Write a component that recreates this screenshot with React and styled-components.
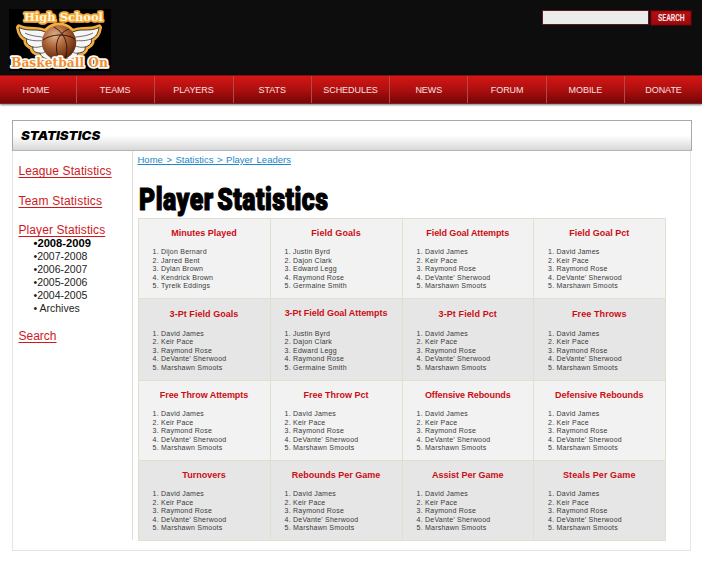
import React from 'react';
import styled, { createGlobalStyle } from 'styled-components';

const Global = createGlobalStyle`
  *, *::before, *::after { box-sizing: border-box; }
  html, body { margin: 0; padding: 0; background: #fff; }
  body {
    font-family: 'Liberation Sans', Arial, sans-serif;
    color: #222;
  }
`;

const Page = styled.div`
  width: 702px;
  height: 563px;
  background: #fff;
`;

const Header = styled.header`
  display: flex;
  justify-content: space-between;
  align-items: flex-start;
  height: 75px;
  padding: 9px 10px 0 9px;
  background: #0d0d0d;
`;

const LogoArt = styled.svg`
  display: block;
  width: 102px;
  height: 62px;
  overflow: visible;
`;

const LogoText = styled.text`
  font-family: 'DejaVu Serif', serif;
  font-weight: 700;
  font-size: ${(p) => p.$size}px;
  paint-order: stroke;
  stroke-linejoin: round;
`;

const SearchForm = styled.form`
  display: flex;
  gap: 1px;
  margin-top: 1px;
`;

const SearchInput = styled.input`
  width: 107px;
  height: 15px;
  padding: 0 3px;
  border: 1px solid #5c1a1f;
  border-radius: 0;
  background: #ebebeb;
  font-size: 9px;
  outline: none;
`;

const SearchButton = styled.button`
  display: flex;
  align-items: center;
  justify-content: center;
  width: 42px;
  height: 16px;
  padding: 0;
  border: 1px solid #4a0508;
  background: linear-gradient(#b80f12, #9c0a0c);
  box-shadow: inset 0 0 2px #5a0406;
  color: #f6e4e4;
  font: 700 8.5px/14px Roboto, sans-serif;
`;

const SearchLabel = styled.span`
  transform: scaleX(0.82);
`;

const Nav = styled.nav`
  display: grid;
  grid-template-columns: 77px repeat(7, 78.3px) 1fr;
  height: 29px;
  border-top: 1px solid #7d1216;
  border-bottom: 1px solid #7d2024;
  background: linear-gradient(#d51615, #ae0f0f 50%, #760606);
  box-shadow: 0 1px 2px rgba(0, 0, 0, 0.5);
`;

const NavItem = styled.a`
  display: flex;
  align-items: center;
  justify-content: center;
  padding-right: ${(p) => p.$shift || 0}px;
  border-right: 1px solid #b5484a;
  color: #f3e2e2;
  font-size: 9px;
  line-height: 10px;
  letter-spacing: -0.05px;

  &:last-child {
    border-right: 0;
  }
`;

const TitleBar = styled.div`
  display: flex;
  align-items: center;
  width: 680px;
  height: 31px;
  margin: 16px 0 0 12px;
  padding: 0 0 0 8px;
  border: 1px solid #a8a8a8;
  border-bottom-color: #b4b4b4;
  background: linear-gradient(#fff 50%, #d8d8d8);
`;

const TitleText = styled.h2`
  margin: 0;
  font: italic 900 12px/14px Inter, sans-serif;
  color: #000;
  transform: scaleX(1.1);
  transform-origin: left;
`;

const Body = styled.div`
  display: flex;
  width: 679px;
  height: 400px;
  margin-left: 12px;
  padding-bottom: 10px;
  border: 1px solid #e4e4e4;
  border-top: 0;
`;

const Sidebar = styled.aside`
  width: 120px;
  padding: 13px 0 0 5.5px;
  border-right: 1px solid #dedede;
`;

const SideLink = styled.a`
  display: block;
  margin-top: ${(p) => p.$gap || 0}px;
  color: #d0181c;
  font-size: 12px;
  line-height: 14px;
  letter-spacing: ${(p) => p.$track || 0}px;
  text-decoration: underline;
  text-underline-offset: 1.5px;
  white-space: nowrap;
`;

const YearList = styled.ul`
  margin: 0 0 0 15px;
  padding: 0;
  list-style: none;
`;

const Year = styled.li`
  height: 13px;
  color: ${(p) => (p.$current ? '#000' : '#222')};
  font-size: ${(p) => (p.$current ? 11.2 : 10.5)}px;
  font-weight: ${(p) => (p.$current ? 700 : 400)};
  line-height: 12.5px;
  white-space: nowrap;
`;

const Main = styled.main`
  display: flex;
  flex-direction: column;
  padding-left: 4.5px;
`;

const Breadcrumb = styled.a`
  height: 12px;
  margin-top: 3px;
  color: #2088c8;
  font-size: 9.5px;
  line-height: 12px;
  word-spacing: 0.9px;
  text-decoration: underline;
  text-underline-offset: 1px;
  white-space: nowrap;
`;

const Heading = styled.h1`
  height: 37px;
  margin: 15px 0 0 1.5px;
  color: #000;
  font: 900 31.5px/37px Roboto, sans-serif;
  letter-spacing: 0.6px;
  word-spacing: -4px;
  -webkit-text-stroke: 1.2px #000;
  transform: scaleX(0.79);
  transform-origin: left;
  white-space: nowrap;
`;

const Grid = styled.div`
  display: grid;
  grid-template-columns: 132px 132px 131.5px 131.5px;
  grid-template-rows: 80px 82px 80px 80px;
  width: 528px;
  border-top: 1px solid #e0dfcf;
  border-left: 1px solid #e0dfcf;
`;

const Card = styled.section`
  padding-top: ${(p) => p.$top}px;
  border-right: 1px solid #e0dfd0;
  border-bottom: 1px solid #e0dfd0;
  background: ${(p) => (p.$dark ? '#e6e6e6' : '#f2f2f2')};
`;

const CardTitle = styled.h3`
  margin: 0;
  color: #cb0d14;
  font-size: 9px;
  font-weight: 700;
  line-height: 11px;
  letter-spacing: ${(p) => p.$track || 0}px;
  text-align: center;
  white-space: nowrap;
`;

const Leaders = styled.ol`
  margin: ${(p) => p.$gap}px 0 0 14px;
  padding: 0;
  list-style: none;
`;

const Leader = styled.li`
  display: flex;
  height: 8.5px;
  color: #3a3a3a;
  font-size: 7px;
  line-height: 8.5px;
  letter-spacing: 0.23px;
  white-space: nowrap;
`;

const Rank = styled.span`
  width: 8.5px;
`;

function Logo() {
  const wing = 'M42 27 C37 22 31 21 26 21 C20 21 15 21 10 18.5 C11 25 13 28 18 30 C16 34 20 37 24 38 C23 42 27 44 31 44 C32 48 36 50 42 51 Z';
  const feathers = 'M16 24 C24 28 31 27 37 29 M18 30 C26 33 32 31 36 32 M24 38 C30 39 33 37 36 36 M31 44 C34 45 36 43 38 41';
  return (
    <LogoArt viewBox="0 0 102 62" role="img" aria-label="High School Basketball On">
      <defs>
        <radialGradient id="ball" cx="38%" cy="30%" r="72%">
          <stop offset="0" stopColor="#e0b48c" />
          <stop offset="0.45" stopColor="#ae663b" />
          <stop offset="1" stopColor="#5e2508" />
        </radialGradient>
      </defs>
      <rect width="102" height="62" fill="#000" />
      <g fill="#f4ae3e" stroke="#f4ae3e" strokeWidth="6" strokeLinejoin="round">
        <path d={wing} />
        <path d={wing} transform="translate(100 0) scale(-1 1)" />
        <circle cx="50" cy="33" r="16.5" />
      </g>
      {[undefined, 'translate(100 0) scale(-1 1)'].map((t, i) => (
        <g key={i} transform={t}>
          <path d={wing} fill="#f6f6f6" stroke="#111" strokeWidth="0.8" />
          <path d={feathers} fill="none" stroke="#333" strokeWidth="0.7" />
        </g>
      ))}
      <circle cx="50" cy="33.5" r="17.2" fill="url(#ball)" />
      <path
        d="M34 31 C42 25 57 24 66 30 M45 18 C58 25 60 39 56 50 M60 20 C47 25 45 38 50 50"
        fill="none"
        stroke="#241006"
        strokeWidth="0.9"
      />
      <LogoText $size={11.5} x="15" y="12" textLength="79" lengthAdjust="spacingAndGlyphs" fill="#fff6dc" stroke="#f5a93a" strokeWidth="3.6">
        High School
      </LogoText>
      <LogoText
        $size={12}
        x="2"
        y="58.2"
        textLength="97"
        lengthAdjust="spacingAndGlyphs"
        fill="#f08f30"
        stroke="#fff"
        strokeWidth="3.4"
      >
        Basketball On
      </LogoText>
    </LogoArt>
  );
}

const NAV = [
  ['HOME', 4], ['TEAMS', 1], ['PLAYERS', 1], ['STATS', 0], ['SCHEDULES', 0],
  ['NEWS', 0], ['FORUM', 0], ['MOBILE', 0], ['DONATE', 0],
];

const YEARS = ['•2007-2008', '•2006-2007', '•2005-2006', '•2004-2005', '• Archives'];

const DEFAULT = ['David James', 'Keir Pace', 'Raymond Rose', 'DeVante’ Sherwood', 'Marshawn Smoots'];
const JUSTIN = ['Justin Byrd', 'Dajon Clark', 'Edward Legg', 'Raymond Rose', 'Germaine Smith'];

const CARDS = [
  { title: 'Minutes Played', names: ['Dijon Bernard', 'Jarred Bent', 'Dylan Brown', 'Kendrick Brown', 'Tyreik Eddings'] },
  { title: 'Field Goals', track: 0.1, names: JUSTIN },
  { title: 'Field Goal Attempts', track: -0.1 },
  { title: 'Field Goal Pct' },
  { title: '3-Pt Field Goals', track: 0.05 },
  { title: '3-Pt Field Goal Attempts', track: -0.06, names: JUSTIN, raised: true },
  { title: '3-Pt Field Pct', track: 0.1 },
  { title: 'Free Throws', track: 0.1 },
  { title: 'Free Throw Attempts', track: -0.07 },
  { title: 'Free Throw Pct' },
  { title: 'Offensive Rebounds', track: -0.1 },
  { title: 'Defensive Rebounds', track: -0.04 },
  { title: 'Turnovers' },
  { title: 'Rebounds Per Game' },
  { title: 'Assist Per Game' },
  { title: 'Steals Per Game', track: 0.1 },
];

const ROW_TOP = [8.5, 10, 8.5, 8.5];

export default function App() {
  return (
    <Page>
      <Global />
      <Header>
        <Logo />
        <SearchForm>
          <SearchInput aria-label="Search" />
          <SearchButton type="button"><SearchLabel>SEARCH</SearchLabel></SearchButton>
        </SearchForm>
      </Header>
      <Nav>
        {NAV.map(([label, shift]) => (
          <NavItem key={label} $shift={shift}>{label}</NavItem>
        ))}
      </Nav>
      <TitleBar>
        <TitleText>STATISTICS</TitleText>
      </TitleBar>
      <Body>
        <Sidebar>
          <SideLink $track={0.1}>League Statistics</SideLink>
          <SideLink $gap={16} $track={0.2}>Team Statistics</SideLink>
          <SideLink $gap={15} $track={0.08}>Player Statistics</SideLink>
          <YearList>
            <Year $current>•2008-2009</Year>
            {YEARS.map((y) => <Year key={y}>{y}</Year>)}
          </YearList>
          <SideLink $gap={14}>Search</SideLink>
        </Sidebar>
        <Main>
          <Breadcrumb>Home &gt; Statistics &gt; Player Leaders</Breadcrumb>
          <Heading>Player Statistics</Heading>
          <Grid>
            {CARDS.map((card, i) => {
              const row = Math.floor(i / 4);
              const top = ROW_TOP[row] - (card.raised ? 1.5 : 0);
              return (
                <Card key={card.title} $dark={row % 2 === 1} $top={top}>
                  <CardTitle $track={card.track}>{card.title}</CardTitle>
                  <Leaders $gap={card.raised ? 11 : 9.5}>
                    {(card.names || DEFAULT).map((name, n) => (
                      <Leader key={name}><Rank>{n + 1}.</Rank>{name}</Leader>
                    ))}
                  </Leaders>
                </Card>
              );
            })}
          </Grid>
        </Main>
      </Body>
    </Page>
  );
}
